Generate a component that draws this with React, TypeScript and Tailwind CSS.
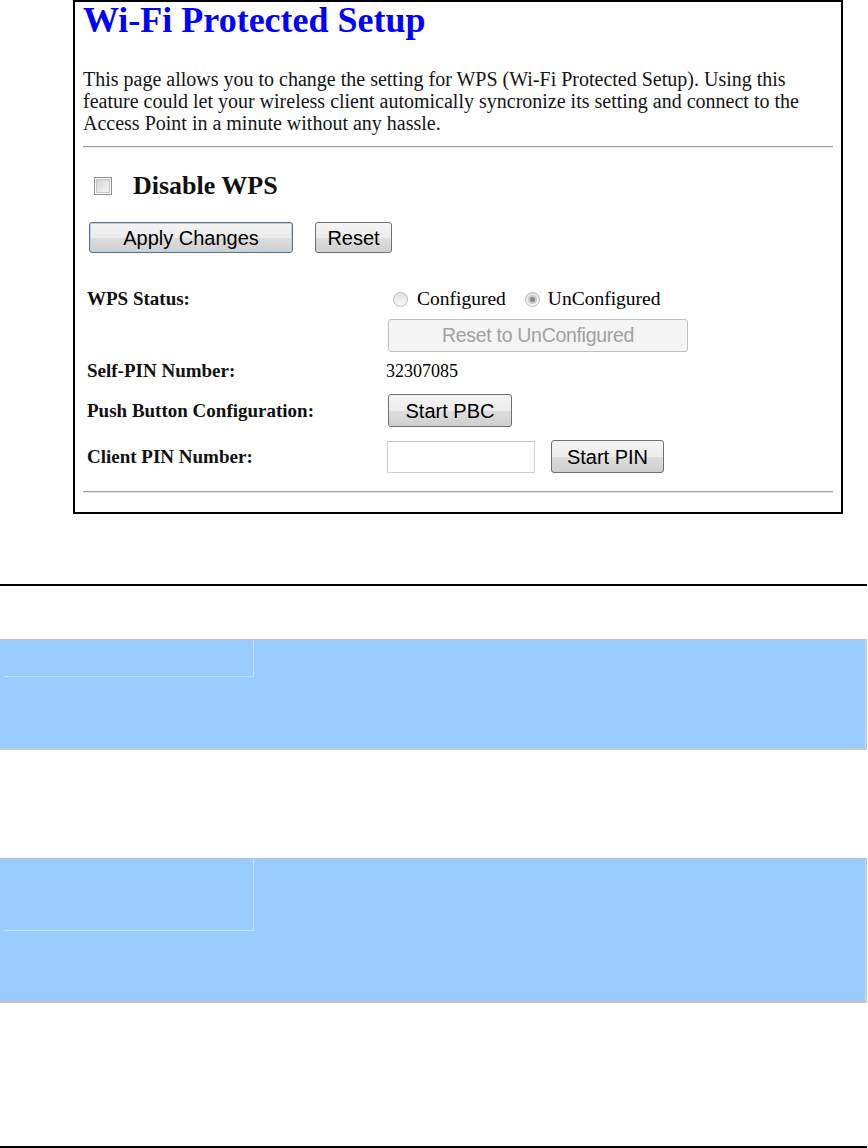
const serif = "font-['Liberation_Serif','Times_New_Roman',serif]";
const sans = "font-['Liberation_Sans',Arial,sans-serif]";

const btn =
  "h-full rounded-[3px] border border-[#707070] bg-[linear-gradient(#f4f4f4,#ececec_50%,#dedede_50%,#cfcfcf)] text-[20px] leading-none text-black " +
  sans;

function Radio({ checked }: { checked?: boolean }) {
  return (
    <span className="flex h-[15px] w-[15px] items-center justify-center rounded-full border border-[#b9b9b9] bg-[linear-gradient(#e2e2e2,#f7f7f7)]">
      {checked && (
        <span className="flex h-[9px] w-[9px] items-center justify-center rounded-full bg-[#c9c9c9]">
          <span className="h-[5px] w-[5px] rounded-full bg-[#8a8a8a]" />
        </span>
      )}
    </span>
  );
}

function Row({ label, height, children }: { label: string; height: string; children?: React.ReactNode }) {
  return (
    <div className={`flex items-center ${height}`}>
      <div className="w-[305px] pl-[4px] text-[19px] font-bold leading-[24px] text-[#111]">{label}</div>
      <div className="flex h-full items-center">{children}</div>
    </div>
  );
}

function BlueBox({ height, cell }: { height: string; cell: string }) {
  return (
    <div className={`w-[867px] ${height} border-t border-b-2 border-r border-t-[#b9c1ca] border-b-[#c3c7cc] border-r-[#b9c6d4] bg-[#99ccff]`}>
      <div className="h-full border-r border-[#c2ddfa]">
        <div className={`ml-[4px] w-[250px] ${cell} border-r border-b border-[#c4dffb]`} />
      </div>
    </div>
  );
}

export default function App() {
  return (
    <div className={`h-[1148px] w-[868px] overflow-hidden bg-white text-black ${serif}`}>
      <div className="ml-[73px] h-[514px] w-[770px] border-2 border-black px-[8px]">
        <h1 className="whitespace-nowrap text-[36px] font-bold leading-[36px] text-[#0000ff]">Wi-Fi Protected Setup</h1>

        <p className="mt-[30px] whitespace-nowrap text-[20px] leading-[22px] text-[#151515]">
          This page allows you to change the setting for WPS (Wi-Fi Protected Setup). Using this
          <br />
          feature could let your wireless client automically syncronize its setting and connect to the
          <br />
          Access Point in a minute without any hassle.
        </p>

        <div className="mt-[12px] h-[2px] border-t border-b border-t-[#a0a0a0] border-b-[#e6e6e6]" />

        <div className="mt-[23px] flex h-[30px] items-center">
          <span className="ml-[11px] flex h-[18px] w-[18px] items-center justify-center border border-[#8f8f8f] bg-white">
            <span className="h-[14px] w-[14px] border border-[#c7c7c7] bg-[linear-gradient(135deg,#d4d4d4,#f5f5f5)]" />
          </span>
          <span className="ml-[21px] text-[26px] font-bold leading-[30px] text-[#111]">Disable WPS</span>
        </div>

        <div className="mt-[21px] flex h-[31px]">
          <button className={`${btn} ml-[6px] w-[204px] border-[#3c8fd0] shadow-[inset_0_0_0_1px_#a7d6f5]`}>
            Apply Changes
          </button>
          <button className={`${btn} ml-[22px] w-[77px]`}>Reset</button>
        </div>

        <div className="mt-[34px]">
          <Row label="WPS Status:" height="h-[24px]">
            <span className="ml-[5px]">
              <Radio />
            </span>
            <span className="ml-[9px] text-[19.5px] leading-[24px]">Configured</span>
            <span className="ml-[19px]">
              <Radio checked />
            </span>
            <span className="ml-[8px] text-[19.5px] leading-[24px]">UnConfigured</span>
          </Row>

          <div className="mt-[8px] flex h-[33px] pl-[305px]">
            <button
              disabled
              className={`h-full w-[300px] rounded-[3px] border border-[#bfc2c4] bg-[#f4f4f4] text-[19.5px] leading-none tracking-[-0.3px] text-[#a2a2a2] ${sans}`}
            >
              Reset to UnConfigured
            </button>
          </div>

          <div className="mt-[7px]">
            <Row label="Self-PIN Number:" height="h-[24px]">
              <span className="-ml-[2px] text-[18px] leading-[24px]">32307085</span>
            </Row>
          </div>

          <div className="mt-[11px]">
            <Row label="Push Button Configuration:" height="h-[33px]">
              <button className={`${btn} w-[124px]`}>Start PBC</button>
            </Row>
          </div>

          <div className="mt-[13px]">
            <Row label="Client PIN Number:" height="h-[33px]">
              <input
                type="text"
                className="-ml-[1px] h-[32px] w-[148px] border border-[#d2d2d2] border-t-[#c2c2c2] bg-white outline-none"
              />
              <button className={`${btn} ml-[16px] h-[32px] w-[113px]`}>Start PIN</button>
            </Row>
          </div>
        </div>

        <div className="mt-[18px] h-[2px] border-t border-b border-t-[#a0a0a0] border-b-[#e6e6e6]" />
      </div>

      <div className="mt-[70px] h-[2px] w-[867px] bg-black" />

      <div className="mt-[53px]">
        <BlueBox height="h-[111px]" cell="h-[37px]" />
      </div>

      <div className="mt-[108px]">
        <BlueBox height="h-[145px]" cell="h-[72px]" />
      </div>

      <div className="mt-[143px] h-[2px] w-[867px] bg-black" />
    </div>
  );
}
